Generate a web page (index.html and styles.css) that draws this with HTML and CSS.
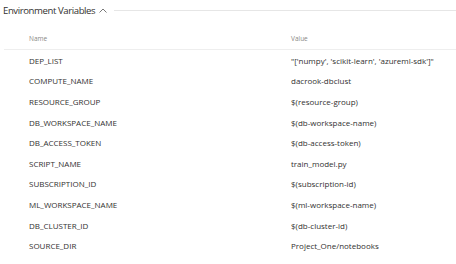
FILE: index.html
```html
<!DOCTYPE html>
<html>
<head>
<meta charset="utf-8">
<link rel="stylesheet" href="styles.css">
</head>
<body>
<div class="panel">
  <div class="section-head">
    <span class="title">Environment Variables</span>
    <svg class="chev" width="8" height="5" viewBox="0 0 8 5"><path d="M0.5 4.5 L4 1 L7.5 4.5" fill="none" stroke="#555" stroke-width="0.8"/></svg>
    <span class="rule"></span>
  </div>
  <div class="table">
    <div class="row head"><span class="c1">Name</span><span class="c2">Value</span></div>
    <div class="row"><span class="c1">DEP_LIST</span><span class="c2">"['numpy', 'scikit-learn', 'azureml-sdk']"</span></div>
    <div class="row"><span class="c1">COMPUTE_NAME</span><span class="c2">dacrook-dbclust</span></div>
    <div class="row"><span class="c1">RESOURCE_GROUP</span><span class="c2">$(resource-group)</span></div>
    <div class="row"><span class="c1">DB_WORKSPACE_NAME</span><span class="c2">$(db-workspace-name)</span></div>
    <div class="row"><span class="c1">DB_ACCESS_TOKEN</span><span class="c2">$(db-access-token)</span></div>
    <div class="row"><span class="c1">SCRIPT_NAME</span><span class="c2">train_model.py</span></div>
    <div class="row"><span class="c1">SUBSCRIPTION_ID</span><span class="c2">$(subscription-id)</span></div>
    <div class="row"><span class="c1">ML_WORKSPACE_NAME</span><span class="c2">$(ml-workspace-name)</span></div>
    <div class="row"><span class="c1">DB_CLUSTER_ID</span><span class="c2">$(db-cluster-id)</span></div>
    <div class="row"><span class="c1">SOURCE_DIR</span><span class="c2">Project_One/notebooks</span></div>
  </div>
</div>
</body>
</html>
```
FILE: styles.css
```css
html, body { margin: 0; padding: 0; background: #fff; }
body { font-family: "Open Sans", "Noto Sans", sans-serif; color: #323130; }
.panel { width: 456px; height: 264px; overflow: hidden; }
.section-head { display: flex; align-items: center; height: 20px; padding-left: 3px; }
.title { font-size: 9.6px; color: #323130; letter-spacing: -0.42px; }
.chev { margin-left: 4px; margin-right: 7px; }
.rule { flex: 1; height: 1px; background: #e6e6e6; }
.table { margin-top: 8px; padding-left: 4px; }
.row { display: flex; height: 20.6px; align-items: center; font-size: 8px; }
.row .c1 { width: 262px; padding-left: 25px; }
.row .c2 { flex: 1; }
.row.head { height: 21px; font-size: 6.5px; color: #8a8886; border-bottom: 1px solid #eeeeee; }
```
